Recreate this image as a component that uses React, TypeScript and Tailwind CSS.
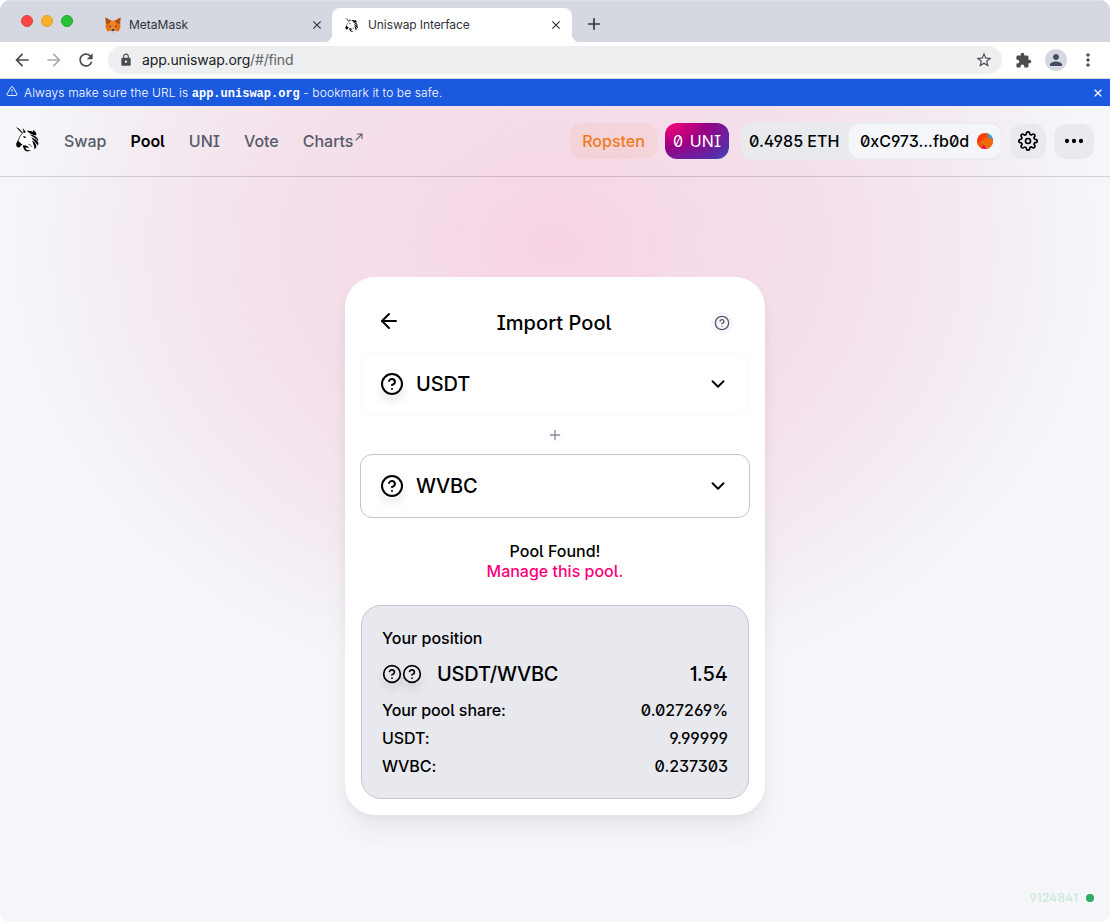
import React from 'react';
import { TriangleAlert, ArrowLeft, ChevronDown, Ellipsis, Plus, X } from 'lucide-react';
import { FiHelpCircle, FiSettings } from 'react-icons/fi';
import { MdArrowBack, MdArrowForward, MdExtension, MdLock, MdMoreVert, MdPerson, MdRefresh, MdStarBorder, MdClose, MdAdd } from 'react-icons/md';

const FONT = "font-['Inter',sans-serif] [font-feature-settings:'ss01','ss02','cv01','cv03']";

function Fox() {
  return (
    <svg className="size-4 shrink-0" viewBox="0 0 34 34">
      <path d="M1 1 14 8h6L33 1l-1 11 1 10-4 9-8-2-3 4h-2l-3-4-8 2-4-9 1-10z" fill="#e7711b" />
      <path d="M1 1 13 8l-3 5-8 2zM33 1 21 8l3 5 8 2z" fill="#a9521f" />
      <path d="M13 8h8l4 10-2 9H11L9 18z" fill="#f5841f" />
      <path d="m9 17 5 4-4 1zM25 17l-5 4 4 1z" fill="#263447" />
      <path d="m12 29 2-3h6l2 3-3 4h-4z" fill="#d6c4b6" />
      <path d="M14 26h6v3h-6z" fill="#17202b" />
    </svg>
  );
}

function Unicorn({ className }: { className: string }) {
  return (
    <svg className={className} viewBox="0 0 24 25" fill="none">
      <path d="M6 7 9 3l3 2 5 4 2 8-2 6-8-4-7 1-1-4 3-6z" fill="#fff" />
      <path d="M.6.4 6.3 6.6M2 1.1l4.9 4.6" stroke="#000" strokeWidth=".75" />
      <path d="M7 1.3 10 5.2 7.6 6z" fill="#000" />
      <path d="M6.4 6.6 3.8 9.6 2 14" stroke="#000" strokeWidth=".7" />
      <path d="M2 13.5C.7 14.9-.2 17 .4 18.8c.7 2 2.9 2 4 .7.6-.8.8-1.7 2.3-2.1-.8-.3-1.6-.7-2.1-1.5-.8-.3-1.4-1-2.6-2.4Z" fill="#000" />
      <path d="M7 9.6c1.1-.5 2.4-.3 3 .8-.9 1-2.3.8-3-.8Z" fill="#000" />
      <path d="M10.8 3.9c2.2-.4 4.4-.1 6.4 1.1l-.3-2.2c2.6 1.6 3.8 3.4 3.5 5.3-3.2.3-6.4-1.5-9.6-4.2Z" fill="#000" />
      <path d="M13.4 7.3c4.5.6 7.4 2.2 8.8 5.1l-.1 1.8c-1.7-2.7-4.9-3.9-8.7-6.9Z" fill="#000" />
      <path d="M15.2 10.2c4 1.4 6.5 3.5 7.3 6.3l-.7 2.2c-1-2.7-4-4.3-6.6-8.5Z" fill="#000" />
      <path d="M16 13.4c3.1 1.5 4.7 3.9 4.3 7.2l-2.1 2c.8-3.5-1.1-5.4-2.2-9.2Z" fill="#000" />
      <path d="M6.8 18.6c2.7-.8 5.4.4 6.1 2.6l-2-.7c-1.2-.2-1.8.6-1.1 1.5 1.2 1.3 3 1.6 5 1-1.6 2.1-5.1 1.8-6.4-.2-.8-1.3-1.4-2.8-1.6-4.2Z" fill="#000" />
      <path d="M12.5 17.4c1.5.2 2.7 1 3.5 2.4" stroke="#000" strokeWidth=".7" />
    </svg>
  );
}

function Token({ className }: { className: string }) {
  return (
    <span className={`flex shrink-0 rounded-full shadow-[0_6px_10px_rgba(0,0,0,0.075)] ${className}`}>
      <FiHelpCircle className="size-full" />
    </span>
  );
}

function Tabs() {
  return (
    <div className="flex h-[42px] items-end bg-[#d5d8e0] shadow-[inset_0_1px_0_#dfe1e6] [font-feature-settings:normal]">
      <div className="flex h-full w-[93px] gap-2 pl-[21px] pt-[15px]">
        <span className="size-3 rounded-full border border-[#e0443e] bg-[#ff4645]" />
        <span className="size-3 rounded-full border border-[#dea123] bg-[#ffaf28]" />
        <span className="size-3 rounded-full border border-[#1aab29] bg-[#28c232]" />
      </div>
      <div className="flex h-[34px] w-[239px] items-center pl-3 pr-2">
        <Fox />
        <span className="ml-2 flex-1 text-[12px] text-[#303238]">MetaMask</span>
        <MdClose className="size-[14px] text-[#303238]" />
      </div>
      <div className="relative flex h-[34px] w-60 items-center rounded-t-lg bg-white pl-[13px] pr-[9px] before:absolute before:bottom-0 before:-left-2 before:size-2 before:bg-[radial-gradient(circle_at_0_0,#d5d8e0_8px,white_8.5px)] after:absolute after:bottom-0 after:-right-2 after:size-2 after:bg-[radial-gradient(circle_at_100%_0,#d5d8e0_8px,white_8.5px)]">
        <Unicorn className="size-[14px] shrink-0" />
        <span className="ml-[9px] flex-1 text-[12px] tracking-[-.09px] text-[#303238]">Uniswap Interface</span>
        <MdClose className="size-[14px] text-[#303238]" />
      </div>
      <MdAdd className="mb-2 ml-3 size-5 text-[#303238]" />
    </div>
  );
}

function Toolbar() {
  return (
    <div className="flex h-[37px] items-center border-b border-[#d5d7da] bg-white pl-3 text-[#494c50] [font-feature-settings:normal]">
      <MdArrowBack className="size-5" />
      <MdArrowForward className="ml-3 size-5 text-[#a9abae]" />
      <MdRefresh className="ml-3 size-5" />
      <div className="ml-3 flex h-7 w-[894px] items-center rounded-full bg-[#eeeff1] pl-[11px] pr-[9px]">
        <MdLock className="size-[14px]" />
        <span className="-mt-px ml-[9px] flex-1 text-[14px] tracking-[-.15px] text-[#5f6368]"><span className="text-[#202124]">app.uniswap.org</span>/#/find</span>
        <MdStarBorder className="size-[18px]" />
      </div>
      <MdExtension className="ml-[13px] size-[17px]" />
      <span className="ml-[13px] flex size-[22px] items-center justify-center rounded-full bg-[#d5d8e0]"><MdPerson className="size-[18px] text-[#434d61]" /></span>
      <MdMoreVert className="ml-[11px] size-5" />
    </div>
  );
}

function Banner() {
  return (
    <div className="flex h-[27px] items-center bg-[#1b59df] pl-[6px] pr-[6px] text-[12px] text-white">
      <TriangleAlert className="-mt-1 size-3" strokeWidth={1.8} />
      <span className="ml-[6px] mt-px flex-1 whitespace-pre font-light tracking-[.12px] [font-feature-settings:normal]">Always make sure the URL is <code className="font-['Courier_10_Pitch','Liberation_Mono',monospace] font-bold tracking-normal">app.uniswap.org</code> - bookmark it to be safe.</span>
      <X className="mt-px size-3" strokeWidth={2.3} />
    </div>
  );
}

function Header() {
  return (
    <header className="flex h-[71px] items-center border-b border-black/15 px-4 text-[16px] font-medium text-[#565a69]">
      <Unicorn className="mb-1 h-[25px] w-6" />
      <nav className="ml-6 flex items-center gap-6 tracking-[-.02px]">
        <span>Swap</span>
        <span className="font-semibold text-black">Pool</span>
        <span>UNI</span>
        <span>Vote</span>
        <span className="flex">Charts
          <svg className="ml-[2px] mt-1 size-2" viewBox="0 0 8 8" fill="none" stroke="currentColor" strokeWidth="1.1"><path d="M.7 7.3 7 1M2 1h5v5" /></svg>
        </span>
      </nav>
      <div className="ml-auto flex items-center gap-2 text-black">
        <span className="flex h-9 w-[87px] items-center justify-center rounded-xl bg-[#f3841e12] text-[#f07a1c]">Ropsten</span>
        <span className="flex h-9 w-16 items-center justify-center rounded-xl bg-[radial-gradient(174.47%_188.91%_at_1.84%_0%,#ff007a_0%,#9b0083_35%,#5231ac_67%,#2172e5_100%)] whitespace-pre font-normal tracking-[.1px] text-white">0 <span className="ml-[2px]">UNI</span></span>
        <div className="ml-1 flex h-[38px] items-center rounded-xl bg-[#e8eaee]">
          <span className="w-[107px] pl-2">0.4985 ETH</span>
          <span className="flex h-9 w-[154px] items-center rounded-xl border border-[#edeef2] bg-[#f5f6fa] pl-[11px]">
            <span className="w-[117px]">0xC973...fb0d</span>
            <svg className="size-4" viewBox="0 0 16 16">
              <clipPath id="avatar"><circle cx="8" cy="8" r="8" /></clipPath>
              <g clipPath="url(#avatar)"><path fill="#fa3c05" d="M0 0h16v16H0z" /><path d="m10 0 1 4 5 3V0z" fill="#23a5e9" /><path d="m9 4 7 2v6l-5 4H9l-2-4-5-2z" fill="#ef6b09" /><path d="m0 9 7 2-3 5H0z" fill="#ee5907" /><path d="m3 16 4-4 2 4z" fill="#f5007d" /></g>
            </svg>
          </span>
        </div>
        <span className="flex h-[35px] w-9 items-center justify-center rounded-xl bg-[#e9eaef]"><FiSettings className="size-5" /></span>
        <span className="flex h-[35px] w-10 items-center justify-center rounded-xl bg-[#e9eaef]"><Ellipsis className="size-6" strokeWidth={2.3} /></span>
      </div>
    </header>
  );
}

function Select({ name, active = false }: { name: string; active?: boolean }) {
  return (
    <div className={active ? '-mx-px flex h-16 items-center rounded-xl border border-[#c3c5cf] px-[19px]' : 'flex h-[62px] items-center rounded-xl border border-[#f7f8fa] px-[18px]'}>
      <Token className="size-6" />
      <span className="ml-3 flex-1 text-[20px] font-medium tracking-[-.1px]">{name}</span>
      <ChevronDown className="mr-px size-[22px]" />
    </div>
  );
}

function Row({ label, value }: { label: string; value: string }) {
  return <div className="flex h-7 items-center justify-between tracking-[-.07px]"><span>{label}</span><span>{value}</span></div>;
}

export default function App() {
  return (
    <main className={`flex h-[922px] w-[1110px] flex-col overflow-hidden rounded-[10px] bg-[#f5f6fa] text-black ${FONT}`}>
      <Tabs />
      <Toolbar />
      <Banner />
      <div className="flex flex-1 flex-col bg-[radial-gradient(ellipse_540px_450px_at_555px_140px,#f7d3e4_0%,#f5dbe8_25%,#f4e0eb_50%,#f4e9f1_75%,#f4f2f6_92%,#f5f6fa_100%)]">
        <Header />
        <section className="mx-auto mt-[100px] h-[538px] w-[420px] rounded-[30px] bg-white px-4 shadow-[0_0_1px_rgba(0,0,0,0.01),0_4px_8px_rgba(0,0,0,0.04),0_16px_24px_rgba(0,0,0,0.04),0_24px_32px_rgba(0,0,0,0.01)]">
          <div className="flex h-[76px] items-center px-4 pt-4">
            <ArrowLeft className="-mt-1 size-6" />
            <h1 className="mr-1 flex-1 text-center text-[20px] font-medium tracking-[.05px]">Import Pool</h1>
            <span className="flex size-[22px] items-center justify-center rounded-full bg-[#f5f6fa]"><FiHelpCircle className="size-4 text-[#565a69]" /></span>
          </div>
          <Select name="USDT" />
          <Plus className="mx-auto mb-[11px] mt-3 size-4 text-[#888d9b]" />
          <Select name="WVBC" active />
          <div className="mt-[23px] flex h-10 flex-col items-center text-[16px] font-medium leading-5"><span>Pool Found!</span><span className="text-[#ff007a]">Manage this pool.</span></div>
          <div className="mt-6 h-[194px] rounded-[20px] border border-[#c3c5cf] bg-[#e8e9ee] px-5 pt-[22px] text-[16px] font-medium">
            <div className="leading-5">Your position</div>
            <div className="mt-[3px] flex h-[45px] items-center text-[20px]">
              <Token className="size-5" /><Token className="size-5" />
              <span className="ml-[15px] flex-1 tracking-[-.2px]">USDT/WVBC</span><span>1.54</span>
            </div>
            <Row label="Your pool share:" value="0.027269%" />
            <Row label="USDT:" value="9.99999" />
            <Row label="WVBC:" value="0.237303" />
          </div>
        </section>
        <div className="mb-4 mr-4 mt-auto flex h-4 items-center justify-end gap-2 text-[12px] font-medium tracking-[.2px] text-[#c8e9d5]"><span>9124841</span><span className="size-2 rounded-full bg-[#27ae60]" /></div>
      </div>
    </main>
  );
}
